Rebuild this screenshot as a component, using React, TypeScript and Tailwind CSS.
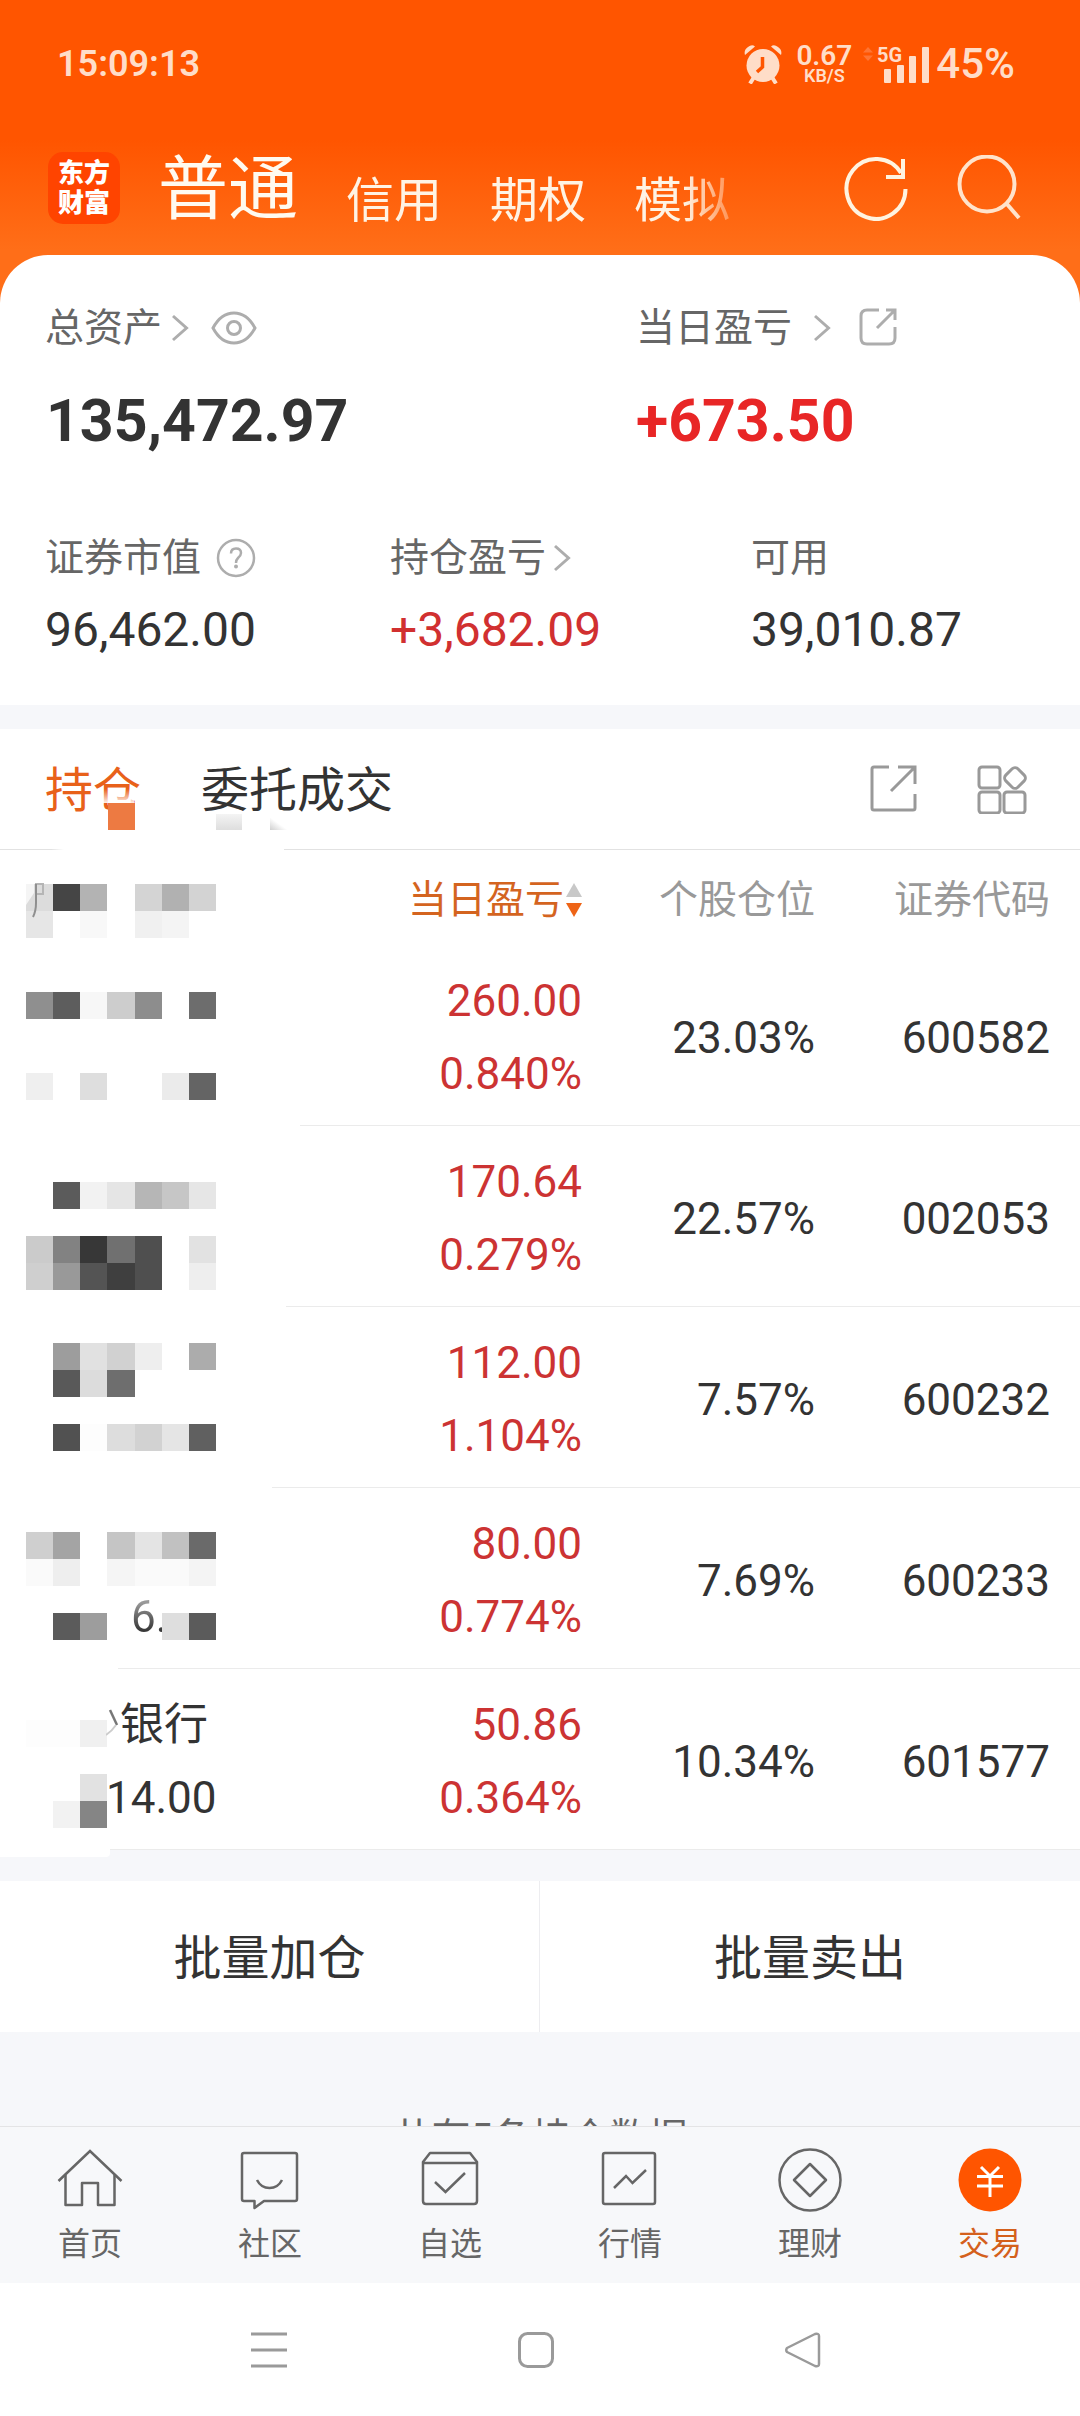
import React from 'react';

type Cell = string | null;

/* Pixelated privacy mask laid over the hidden names: seven columns of 27px tiles. */
function Mosaic({ rows, className }: { rows: Cell[][]; className: string }) {
  return (
    <div aria-hidden="true" className={`absolute left-[26px] grid w-[190px] auto-rows-[27px] grid-cols-7 ${className}`}>
      {rows.flatMap((row, r) =>
        Array.from({ length: 7 }, (_, c) => (
          <span key={`${r}-${c}`} style={{ backgroundColor: row[c] ?? 'transparent' }} />
        )),
      )}
    </div>
  );
}

function Chevron() {
  return (
    <svg width="18" height="28" viewBox="0 0 18 28" fill="none" stroke="#adadad" strokeWidth="3" aria-hidden="true">
      <path d="M1 2 L14.500 14 L1 26" />
    </svg>
  );
}

const holdings = [
  {
    code: '600582', ratio: '23.03%', profit: '260.00', rate: '0.840%', line1: '', line2: '',
    maskTop: 'top-[47px]', divider: 'left-[300px]',
    mask: [
      ['#8f8f8f', '#5d5d5d', '#f7f7f7', '#cdcdcd', '#8d8d8d', null, '#6d6d6d'],
      [], [],
      ['#efefef', null, '#dedede', null, null, '#ebebeb', '#646464'],
    ] as Cell[][],
  },
  {
    code: '002053', ratio: '22.57%', profit: '170.64', rate: '0.279%', line1: '', line2: '',
    maskTop: 'top-[56px]', divider: 'left-[286px]',
    mask: [
      [null, '#5b5b5b', '#f2f2f2', '#e5e5e5', '#b6b6b6', '#c6c6c6', '#e6e6e6'],
      [],
      ['#cbcbcb', '#828282', '#373737', '#707070', '#4f4f4f', null, '#e2e2e2'],
      ['#cfcfcf', '#999999', '#545454', '#3f3f3f', '#4f4f4f', null, '#eeeeee'],
    ] as Cell[][],
  },
  {
    code: '600232', ratio: '7.57%', profit: '112.00', rate: '1.104%', line1: '', line2: '',
    maskTop: 'top-[36px]', divider: 'left-[272px]',
    mask: [
      [null, '#9d9d9d', '#e1e1e1', '#d1d1d1', '#eeeeee', null, '#acacac'],
      [null, '#595959', '#dcdcdc', '#6e6e6e', null, null, null],
      [],
      [null, '#515151', '#fdfdfd', '#dddddd', '#d2d2d2', '#e5e5e5', '#606060'],
    ] as Cell[][],
  },
  {
    code: '600233', ratio: '7.69%', profit: '80.00', rate: '0.774%', line1: '', line2: '6.',
    maskTop: 'top-[44px]', divider: 'left-[118px]',
    mask: [
      ['#cfcfcf', '#a4a4a4', null, '#c5c5c5', '#e4e4e4', '#c1c1c1', '#6a6a6a'],
      ['#fafafa', '#eeeeee', null, '#f5f5f5', '#fafafa', '#fafafa', '#f4f4f4'],
      [],
      [null, '#5b5b5b', '#9d9d9d', null, null, '#dedede', '#5b5b5b'],
    ] as Cell[][],
  },
  {
    code: '601577', ratio: '10.34%', profit: '50.86', rate: '0.364%', line1: '银行', line2: '14.00',
    maskTop: 'top-[51px]', divider: 'left-[110px]',
    mask: [
      ['#fdfdfd', '#fdfdfd', '#f0f0f0', null, null, null, null],
      [],
      [null, null, '#e2e2e2', null, null, null, null],
      [null, '#f2f2f2', '#858585', null, null, null, null],
    ] as Cell[][],
  },
];

const navItems = [
  {
    label: '首页',
    icon: (
      <>
        <path d="M1.500 33 L33 3 L64.500 33" />
        <path d="M8.500 27 V57 H25 V35 H41 V57 H57.500 V27" strokeLinejoin="round" />
      </>
    ),
  },
  {
    label: '社区',
    icon: (
      <>
        <path d="M7 5 H58 Q60 5 60 7 V51 Q60 53 58 53 H27 L17.500 60 V53 H7 Q5 53 5 51 V7 Q5 5 7 5 Z" strokeLinejoin="round" />
        <path d="M20 32 Q24 40 32.500 40 Q41 40 45 32" />
      </>
    ),
  },
  {
    label: '自选',
    icon: (
      <>
        <path d="M6 14 L13 5 H53 L60 14 V53 Q60 56 57 56 H9 Q6 56 6 53 Z" strokeLinejoin="round" />
        <path d="M6 15 H60" />
        <path d="M18 34 L28.500 44 L48 25" />
      </>
    ),
  },
  {
    label: '行情',
    icon: (
      <>
        <rect x="6" y="5" width="52" height="51" rx="2" />
        <path d="M17 40 L29 28 L35.500 35 L49 22" />
      </>
    ),
  },
  {
    label: '理财',
    icon: (
      <>
        <circle cx="33" cy="32" r="30.500" />
        <path d="M33 16 L49 32 L33 48 L17 32 Z" strokeLinejoin="round" />
      </>
    ),
  },
  {
    label: '交易',
    active: true,
    icon: (
      <>
        <circle cx="33" cy="32" r="31.500" fill="#ff5500" stroke="none" />
        <g stroke="#fff" strokeWidth="3">
          <path d="M24 19 L33 28 L42 19" />
          <path d="M20 28.500 H46 M20 38 H46 M33 28 V49" />
        </g>
      </>
    ),
  },
];

function StatusBar() {
  return (
    <div className="flex h-32 items-center justify-between pr-[65px] pl-[57px] text-[#ffddc8]">
      <span className="text-[36px] leading-10 font-semibold">15:09:13</span>
      <div className="flex h-10 items-center">
        <svg width="38" height="40" viewBox="0 0 38 40" fill="currentColor" aria-hidden="true">
          <circle cx="19" cy="21.500" r="16.500" />
          <path d="M1 11 Q-0.500 6 4 3 Q8 0 11 2.500 Z" />
          <path d="M37 11 Q38.500 6 34 3 Q30 0 27 2.500 Z" />
          <path d="M9.500 34 L6 39.500 M28.500 34 L32 39.500" stroke="currentColor" strokeWidth="4" />
          <path d="M18.500 13 V23 L13 28" fill="none" stroke="#ff5500" strokeWidth="3.500" />
        </svg>
        <div className="ml-[14px] flex flex-col items-center font-semibold">
          <span className="text-[28px] leading-[22px]">0.67</span>
          <span className="text-[18px] leading-[17px]">KB/S</span>
        </div>
        <svg className="ml-[10px]" width="68" height="40" viewBox="0 0 68 40" fill="currentColor" aria-hidden="true">
          <path d="M6 3 L11 8.500 H1 Z M6 17 L11 11.500 H1 Z" fill="#ff7433" />
          <text x="15" y="18" fontSize="20" fontWeight="700" fontFamily="Roboto">5G</text>
          <rect x="22" y="25" width="7" height="14" rx="1" />
          <rect x="35" y="21" width="7" height="18" rx="1" />
          <rect x="47" y="12" width="7" height="27" rx="1" />
          <rect x="60" y="3" width="7" height="36" rx="1" />
        </svg>
        <span className="ml-[6px] text-[42px] leading-10 font-medium">45%</span>
      </div>
    </div>
  );
}

function TopBar() {
  return (
    <header className="flex h-[127px] items-center pr-[57px] pb-2 pl-[48px] text-white">
      <a href="#home" className="flex size-[72px] shrink-0 flex-col items-center justify-center rounded-[15px] bg-[#ff4400] text-[26px] leading-[30px] font-black">
        <span>东方</span>
        <span>财富</span>
      </a>
      <nav className="ml-[38px] flex items-end gap-12 pt-1 [mask-image:linear-gradient(to_right,black_92%,transparent_104%)]">
        <button type="button" className="text-[70px] leading-[84px] text-[#fffaf0]">普通</button>
        <button type="button" className="text-[48px] leading-[62px] text-[#fff3e4]">信用</button>
        <button type="button" className="text-[48px] leading-[62px] text-[#fff3e4]">期权</button>
        <button type="button" className="text-[48px] leading-[62px] text-[#fff3e4]">模拟</button>
      </nav>
      <div className="ml-auto flex items-center gap-[47px]">
        <button type="button" aria-label="刷新">
          <svg width="66" height="66" viewBox="0 0 66 66" fill="none" stroke="#fff3e0" strokeWidth="4">
            <path d="M61.500 34 A29.500 30 0 1 1 57 18" />
            <path d="M59 4 V22 H42" />
          </svg>
        </button>
        <button type="button" aria-label="搜索">
          <svg width="66" height="66" viewBox="0 0 66 66" fill="none" stroke="#ffe3cb" strokeWidth="4">
            <circle cx="30" cy="29" r="27.500" />
            <path d="M49 48 L62 63" />
          </svg>
        </button>
      </div>
    </header>
  );
}

function Summary() {
  const label = 'flex h-12 items-center text-[39px] leading-12 text-[#666]';
  const value = 'mt-5 text-[48px] leading-14';
  return (
    <section className="rounded-t-[48px] bg-white pt-[49px] pr-[46px] pb-[47px] pl-[45px]">
      <div className="grid grid-cols-[591fr_398fr]">
        <div>
          <div className={label}>
            <a href="#assets" className="flex items-center gap-2.5">总资产<Chevron /></a>
            <button type="button" aria-label="隐藏金额" className="ml-[21px]">
              <svg width="46" height="34" viewBox="0 0 46 34" fill="none" stroke="#adadad" strokeWidth="3">
                <path d="M2 17 Q10 2 23 2 Q36 2 44 17 Q36 32 23 32 Q10 32 2 17 Z" />
                <circle cx="23" cy="17" r="6.500" />
              </svg>
            </button>
          </div>
          <p className="mt-[33px] pl-px text-[59px] leading-[72px] font-bold text-[#333]">135,472.97</p>
        </div>
        <div>
          <div className={label}>
            <a href="#today" className="flex items-center gap-[22px]">当日盈亏<Chevron /></a>
            <button type="button" aria-label="分享当日盈亏" className="ml-[26px]">
              <svg width="40" height="40" viewBox="0 0 40 40" fill="none" stroke="#adadad" strokeWidth="3">
                <path d="M21 2 H9 Q3 2 3 8 V30 Q3 36 9 36 H31 Q37 36 37 30 V19" />
                <path d="M28 2 H37 V12 M37 2 L19 20" />
              </svg>
            </button>
          </div>
          <p className="mt-[33px] text-[59px] leading-[72px] font-bold text-[#e82626]">+673.50</p>
        </div>
      </div>
      <div className="mt-[77px] grid grid-cols-[345fr_361fr_283fr]">
        <div>
          <div className={label}>
            证券市值
            <button type="button" aria-label="证券市值说明" className="ml-[15px]">
              <svg width="40" height="40" viewBox="0 0 40 40" fill="none" stroke="#adadad" strokeWidth="2.500">
                <circle cx="20" cy="20" r="18" />
                <path d="M15 15.500 Q15 10.500 20 10.500 Q25 10.500 25 15 Q25 17.500 22 20 Q20 22 20 25" />
                <circle cx="20" cy="28.500" r="2" fill="#adadad" stroke="none" />
              </svg>
            </button>
          </div>
          <p className={`${value} text-[#333]`}>96,462.00</p>
        </div>
        <div>
          <div className={label}>
            <a href="#holding-profit" className="flex items-center gap-2">持仓盈亏<Chevron /></a>
          </div>
          <p className={`${value} text-[#d13030]`}>+3,682.09</p>
        </div>
        <div>
          <div className={label}>可用</div>
          <p className={`${value} text-[#333]`}>39,010.87</p>
        </div>
      </div>
    </section>
  );
}

function PositionTabs() {
  return (
    <div className="relative flex h-[120px] items-center bg-white pr-[53px] pl-[45px] text-[48px] leading-14">
      <button type="button" className="pt-1 text-[#e8611a]">持仓</button>
      <button type="button" className="ml-[60px] pt-1 text-[#333]">委托成交</button>
      <span aria-hidden="true" className="absolute top-[60px] left-[96px] h-[14px] w-[38px] bg-gradient-to-b from-transparent to-white/90" />
      <span aria-hidden="true" className="absolute top-[74px] left-[108px] size-[27px] bg-[#ed7a42]" />
      <span aria-hidden="true" className="absolute top-[85px] left-[216px] h-[16px] w-[26px] bg-gradient-to-b from-[#f4f4f4] to-[#dedede]" />
      <span aria-hidden="true" className="absolute top-[88px] left-[270px] h-[13px] w-[18px] bg-gradient-to-tr from-[#cfcfcf] to-transparent to-50%" />
      <div className="ml-auto flex items-center gap-[58px]">
        <button type="button" aria-label="分享持仓">
          <svg width="50" height="50" viewBox="0 0 50 50" fill="none" stroke="#999" strokeWidth="3">
            <path d="M20 3 H5 Q3 3 3 5 V44 Q3 46 5 46 H44 Q46 46 46 44 V30" />
            <path d="M29 3 H46 V20 M46 3 L22 27" />
          </svg>
        </button>
        <button type="button" aria-label="更多功能">
          <svg width="50" height="50" viewBox="0 0 50 50" fill="none" stroke="#999" strokeWidth="3">
            <rect x="2" y="3" width="21" height="21" rx="3" />
            <rect x="2" y="28" width="21" height="21" rx="3" />
            <rect x="27" y="28" width="21" height="21" rx="3" />
            <rect x="29.500" y="5.500" width="17" height="17" rx="4" transform="rotate(45 38 14)" />
          </svg>
        </button>
      </div>
    </div>
  );
}

function HoldingsTable() {
  return (
    <table className="w-full table-fixed border-collapse bg-white text-right">
      <thead>
        <tr className="h-[95px] text-[39px] leading-12 text-[#999]">
          <th className="relative p-0">
            <Mosaic
              className="top-[34px]"
              rows={[
                ['#dcdcdc', '#454545', '#b3b3b3', null, '#d4d4d4', '#b1b1b1', '#d3d3d3'],
                ['#e6e6e6', null, '#f8f8f8', null, '#f0f0f0', '#f4f4f4', null],
              ]}
            />
            <svg aria-hidden="true" className="absolute top-[33px] left-[26px]" width="20" height="36" viewBox="0 0 20 36" fill="none">
              <path d="M0 0 H8 V10 L0 22 Z" fill="#fff" fillOpacity=".7" />
              <path d="M9 1 H17 V12 M10 11 H17" stroke="#b5b5b5" strokeWidth="2" />
              <path d="M10 1 V20 Q10 28 7 34" stroke="#8f8f8f" strokeWidth="2" />
            </svg>
          </th>
          <th className="w-[270px] p-0 pt-1 font-normal text-[#d4641f]">
            <button type="button" className="inline-flex items-center gap-[2px]">
              当日盈亏
              <svg width="16" height="36" viewBox="0 0 16 36" aria-hidden="true">
                <path d="M8 1 L16 15 H0 Z" fill="#c8c8c8" />
                <path d="M8 35 L16 21 H0 Z" fill="#ee6416" />
              </svg>
            </button>
          </th>
          <th className="w-[233px] p-0 pt-1 font-normal">个股仓位</th>
          <th className="w-[265px] p-0 pt-1 pr-[30px] font-normal">证券代码</th>
        </tr>
      </thead>
      <tbody>
        {holdings.map((h) => (
          <tr key={h.code} className="h-[181px] text-[44px] text-[#333]">
            <td className="relative p-0 pt-1 text-left">
              <div className="flex h-[73px] items-center pl-[120px]">{h.line1}</div>
              <div className={h.line2 === '6.' ? 'flex h-[73px] items-center bg-gradient-to-b from-[#999] from-30% to-[#333] to-70% bg-clip-text pl-[131px] text-transparent' : 'flex h-[73px] items-center pl-[106px]'}>
                {h.line2}
              </div>
              <Mosaic rows={h.mask} className={h.maskTop} />
              {h.line1 === '银行' && (
                <svg aria-hidden="true" className="absolute top-[40px] left-[106px]" width="14" height="32" viewBox="0 0 14 32" fill="none">
                  <path d="M4 1 L11 16" stroke="#777" strokeWidth="2.500" />
                  <path d="M10 16 Q6 22 0 26" stroke="#ccc" strokeWidth="2" />
                </svg>
              )}
              <span className={`absolute right-0 bottom-0 h-px bg-[#ebebeb] ${h.divider}`} />
            </td>
            <td className="p-0 pt-1 text-[#cc3333] shadow-[inset_0_-1px_0_#ebebeb]">
              <div className="h-[73px] leading-[73px]">{h.profit}</div>
              <div className="h-[73px] leading-[73px]">{h.rate}</div>
            </td>
            <td className="p-0 pt-1 shadow-[inset_0_-1px_0_#ebebeb]">{h.ratio}</td>
            <td className="p-0 pt-1 pr-[30px] shadow-[inset_0_-1px_0_#ebebeb]">{h.code}</td>
          </tr>
        ))}
      </tbody>
    </table>
  );
}

export default function App() {
  return (
    <div className="flex min-h-screen w-full flex-col bg-[#f6f7fa] font-[Roboto,'Noto_Sans_CJK_SC',sans-serif]">
      <div className="bg-[linear-gradient(to_bottom,#ff5500_0px,#ff5500_140px,#ff6e18_250px,#ff6e18_100%)]">
        <StatusBar />
        <TopBar />
        <Summary />
      </div>
      <main className="pt-6">
        <PositionTabs />
        <div className="flex h-px bg-white">
          <span className="w-[64px] bg-gradient-to-r from-[#e2e2e2] from-80% to-white" />
          <span className="ml-[220px] flex-1 bg-[#e2e2e2]" />
        </div>
        <HoldingsTable />
        <div className="h-[31px]">
          <div className="h-[7px] w-[110px] rounded-br-[4px] bg-white" />
        </div>
        <div className="grid h-[151px] grid-cols-2 bg-white text-[48px] leading-14 text-[#333]">
          <button type="button" className="border-r border-[#ededf0] pt-1">批量加仓</button>
          <button type="button" className="pt-1">批量卖出</button>
        </div>
        <p className="h-[94px] overflow-hidden pt-[82px] text-center text-[39px] leading-12 text-[#666]">共有5条持仓数据</p>
      </main>
      <nav className="grid h-[157px] grid-cols-6 border-t border-[#e4e4e6] bg-[#f7f8fa]">
        {navItems.map((item) => (
          <a key={item.label} href={`#${item.label}`} className={`flex flex-col items-center pt-[21px] text-[32px] leading-10 ${item.active ? 'text-[#d4601c]' : 'text-[#666]'}`}>
            <svg width="66" height="64" viewBox="0 0 66 64" fill="none" stroke="#666" strokeWidth="2.500" aria-hidden="true">
              {item.icon}
            </svg>
            <span className="mt-3">{item.label}</span>
          </a>
        ))}
      </nav>
      <div className="grid min-h-[132px] flex-1 grid-cols-3 items-center justify-items-center bg-white pr-[144px] pl-[135px]">
        <button type="button" aria-label="最近任务">
          <svg width="38" height="38" viewBox="0 0 38 38" fill="none" stroke="#9a9a9a" strokeWidth="3">
            <path d="M1 3 H37 M1 19 H37 M1 35 H37" />
          </svg>
        </button>
        <button type="button" aria-label="主屏幕">
          <svg width="38" height="38" viewBox="0 0 38 38" fill="none" stroke="#9a9a9a" strokeWidth="3">
            <rect x="2.500" y="2.500" width="33" height="33" rx="8" />
          </svg>
        </button>
        <button type="button" aria-label="返回">
          <svg width="38" height="38" viewBox="0 0 38 38" fill="none" stroke="#9a9a9a" strokeWidth="2.500" strokeLinejoin="round">
            <path d="M3 17 Q1.500 19 3 21 L31 35 Q35 36 35 33 V5 Q35 2 31 3 Z" />
          </svg>
        </button>
      </div>
    </div>
  );
}
